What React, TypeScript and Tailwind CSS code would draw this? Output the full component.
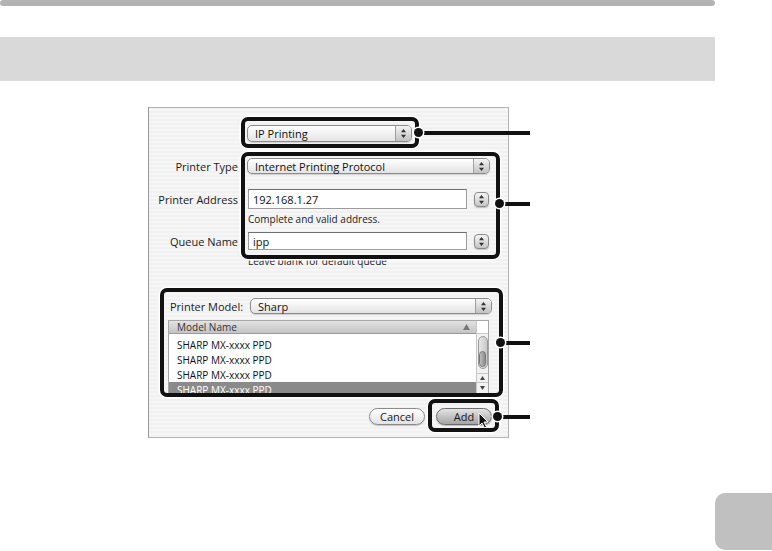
import React from "react";

const rows = ["SHARP MX-xxxx PPD", "SHARP MX-xxxx PPD", "SHARP MX-xxxx PPD", "SHARP MX-xxxx PPD"];

function Arrows() {
  return (
    <svg width="5" height="9" viewBox="0 0 5 9">
      <path d="M2.5 0L5 3.2H0z M0 5.8h5L2.5 9z" fill="#333" />
    </svg>
  );
}

function Popup({ label, className }: { label: string; className: string }) {
  return (
    <div
      className={`flex items-stretch rounded-[5px] border border-[#8c8c8c] bg-linear-to-b from-white to-[#e4e4e4] shadow-[0_1px_1px_rgba(0,0,0,0.15)] ${className}`}
    >
      <span className="flex flex-1 items-center pl-[7px] text-[11px] leading-none text-[#111]">{label}</span>
      <span className="flex w-[16px] items-center justify-center rounded-r-[4px] border-l border-[#a0a0a0] bg-linear-to-b from-[#f4f4f4] to-[#c2c2c2]">
        <Arrows />
      </span>
    </div>
  );
}

function Stepper() {
  return (
    <div className="flex h-[15px] w-[15px] items-center justify-center rounded-[4px] border border-[#8a8a8a] bg-linear-to-b from-[#f6f6f6] to-[#c6c6c6] shadow-[0_1px_1px_rgba(0,0,0,0.2)]">
      <Arrows />
    </div>
  );
}

function Field({ value }: { value: string }) {
  return (
    <div className="flex flex-1 items-center border border-[#9c9c9c] border-t-[#6f6f6f] bg-white pl-[4px] text-[11px] leading-none text-[#111]">
      {value}
    </div>
  );
}

function Dot({ className }: { className: string }) {
  return <div className={`absolute h-[9px] w-[9px] rounded-full bg-[#111] shadow-[0_0_0_1.5px_white] ${className}`} />;
}

export default function App() {
  return (
    <div className="flex h-[551px] w-[772px] flex-col bg-white font-['Open_Sans',sans-serif] text-[#1a1a1a]">
      <div className="h-[6px] w-[715px] rounded-[3px] bg-[#b3b3b3]" />
      <div className="mt-[31px] h-[44px] w-[715px] bg-[#d9d9d9]" />

      <div className="relative ml-[148px] mt-[26px] h-[331px] w-[361px]">
        <div className="flex h-full w-full flex-col border border-[#b4b4b4] border-l-[#9a9a9a] bg-[repeating-linear-gradient(0deg,#f1f1f1_0px,#f1f1f1_2px,#f6f6f6_2px,#f6f6f6_4px)]">
          <div className="pl-[98px] pt-[17px]">
            <Popup label="IP Printing" className="h-[17px] w-[165px]" />
          </div>

          <div className="mt-[16px] flex items-center">
            <span className="w-[90px] pr-[1px] text-right text-[11px] leading-none">Printer Type</span>
            <Popup label="Internet Printing Protocol" className="ml-[8px] h-[16px] w-[243px]" />
          </div>

          <div className="mt-[15px] flex items-center">
            <span className="w-[90px] pr-[1px] text-right text-[11px] leading-none">Printer Address</span>
            <div className="ml-[9px] flex h-[20px] w-[219px]">
              <Field value="192.168.1.27" />
            </div>
            <div className="ml-[7px]">
              <Stepper />
            </div>
          </div>

          <div className="ml-[99px] mt-[4px] text-[10px] leading-[12px]">Complete and valid address.</div>

          <div className="mt-[7px] flex items-center">
            <span className="w-[90px] pr-[1px] text-right text-[11px] leading-none">Queue Name</span>
            <div className="ml-[9px] flex h-[18px] w-[219px]">
              <Field value="ipp" />
            </div>
            <div className="ml-[7px]">
              <Stepper />
            </div>
          </div>

          <div className="ml-[99px] mt-[5px] text-[10px] leading-[12px]">Leave blank for default queue</div>

          <div className="mt-[31px] flex items-center">
            <span className="ml-[21px] w-[80px] text-[11px] leading-none">Printer Model:</span>
            <Popup label="Sharp" className="h-[16px] w-[242px]" />
          </div>

          <div className="ml-[19px] mt-[6px] flex h-[74px] w-[321px] flex-col border border-[#a6a6a6] bg-white">
            <div className="flex h-[13px]">
              <div className="flex flex-1 items-center justify-between border-b border-[#9a9a9a] bg-linear-to-b from-[#e2e2e2] to-[#c4c4c4] pl-[8px] pr-[6px] text-[10px] leading-none text-[#333]">
                <span>Model Name</span>
                <svg width="7" height="6" viewBox="0 0 7 6">
                  <path d="M3.5 0L7 6H0z" fill="#777" />
                </svg>
              </div>
              <div className="w-[12px] border-b border-l border-[#c8c8c8] bg-white" />
            </div>
            <div className="flex flex-1 overflow-hidden">
              <div className="flex flex-1 flex-col pt-[3px]">
                {rows.map((r, i) => (
                  <div
                    key={i}
                    className={`flex h-[15px] shrink-0 items-center pl-[8px] text-[10px] leading-none ${
                      i === 3 ? "bg-[#8a8a8a] text-white" : "text-[#111]"
                    }`}
                  >
                    {r}
                  </div>
                ))}
              </div>
              <div className="flex w-[12px] flex-col items-center border-l border-[#c8c8c8] bg-[#f2f2f2]">
                <div className="mt-[2px] flex h-[34px] w-[10px] items-end justify-center rounded-full border border-[#9a9a9a] bg-linear-to-r from-[#e8e8e8] to-[#c8c8c8] pb-[1px]">
                  <div className="h-[16px] w-[7px] rounded-full border border-[#777] bg-linear-to-r from-[#bdbdbd] to-[#8e8e8e]" />
                </div>
                <div className="mt-[4px] flex h-[10px] w-full items-center justify-center border-t border-[#c8c8c8]">
                  <svg width="5" height="4" viewBox="0 0 5 4">
                    <path d="M2.5 0L5 4H0z" fill="#444" />
                  </svg>
                </div>
                <div className="flex h-[11px] w-full items-center justify-center border-t border-[#c8c8c8]">
                  <svg width="5" height="4" viewBox="0 0 5 4">
                    <path d="M0 0h5L2.5 4z" fill="#444" />
                  </svg>
                </div>
              </div>
            </div>
          </div>

          <div className="ml-[220px] mt-[14px] flex gap-[11px]">
            <div className="flex h-[17px] w-[56px] items-center justify-center rounded-full border border-[#8a8a8a] bg-linear-to-b from-white to-[#e2e2e2] text-[11px] leading-none shadow-[0_1px_1px_rgba(0,0,0,0.2)]">
              Cancel
            </div>
            <div className="relative flex h-[17px] w-[56px] items-center justify-center rounded-full border border-[#6c6c6c] bg-linear-to-b from-[#e4e4e4] to-[#a4a4a4] text-[11px] leading-none shadow-[0_1px_1px_rgba(0,0,0,0.25)]">
              Add
              <svg className="absolute left-[41px] top-[3px]" width="11" height="17" viewBox="0 0 11 17">
                <path d="M1 1v13l3-3 2.5 5 2-1-2.5-5H10z" fill="#111" stroke="white" strokeWidth="1" />
              </svg>
            </div>
          </div>
        </div>

        <div className="absolute left-[93px] top-[10px] h-[31px] w-[178px] rounded-[7px] border-[4px] border-[#111] shadow-[0_0_0_1.5px_white]" />
        <div className="absolute left-[93px] top-[45px] h-[107px] w-[259px] rounded-[7px] border-[4px] border-[#111] shadow-[0_0_0_1.5px_white]" />
        <div className="absolute left-[12px] top-[181px] h-[109px] w-[343px] rounded-[7px] border-[4px] border-[#111] shadow-[0_0_0_1.5px_white]" />
        <div className="absolute left-[280px] top-[292px] h-[33px] w-[71px] rounded-[7px] border-[4px] border-[#111] shadow-[0_0_0_1.5px_white]" />

        <div className="absolute left-[271px] top-[24px] h-[4px] w-[111px] bg-[#111]" />
        <div className="absolute left-[352px] top-[95px] h-[4px] w-[30px] bg-[#111]" />
        <div className="absolute left-[353px] top-[234px] h-[4px] w-[29px] bg-[#111]" />
        <div className="absolute left-[350px] top-[308px] h-[4px] w-[32px] bg-[#111]" />
        <Dot className="left-[266px] top-[21px]" />
        <Dot className="left-[347px] top-[92px]" />
        <Dot className="left-[348px] top-[231px]" />
        <Dot className="left-[345px] top-[305px]" />
      </div>

      <div className="mt-[55px] h-[57px] w-[57px] self-end rounded-l-[10px] bg-[#c0c0c0]" />
    </div>
  );
}
